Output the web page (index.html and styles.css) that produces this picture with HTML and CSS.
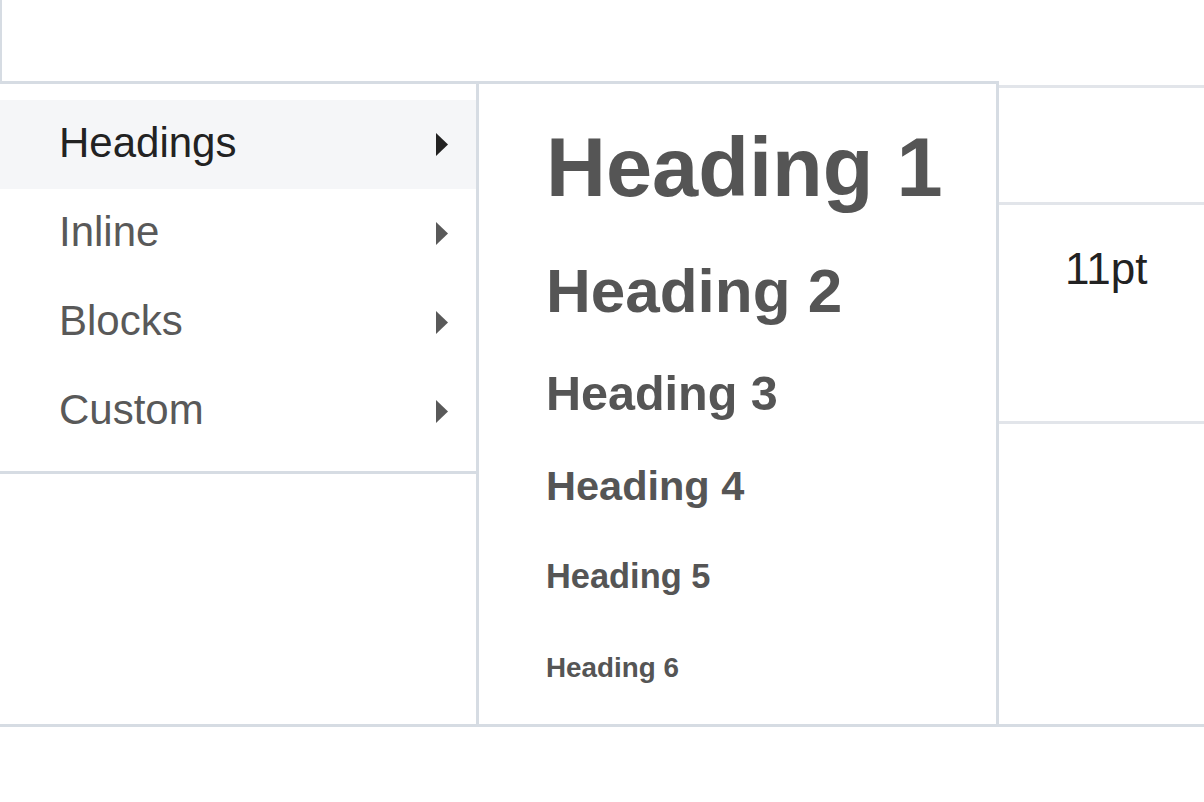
FILE: index.html
```html
<!DOCTYPE html>
<html lang="en">
<head>
    <meta charset="UTF-8">
    <meta name="viewport" content="width=device-width, initial-scale=1.0">
    <title>Formats menu</title>
    <link rel="stylesheet" href="styles.css">
</head>
<body>
    <div class="toolbar-box"></div>

    <div class="stage">
        <!-- Formats menu -->
        <div class="menu-col">
            <ul class="menu">
                <li class="menu-item active">
                    <span>Headings</span>
                    <svg class="caret" viewBox="0 0 12 23"><polygon points="0,0 12,11.5 0,23"/></svg>
                </li>
                <li class="menu-item">
                    <span>Inline</span>
                    <svg class="caret" viewBox="0 0 12 23"><polygon points="0,0 12,11.5 0,23"/></svg>
                </li>
                <li class="menu-item">
                    <span>Blocks</span>
                    <svg class="caret" viewBox="0 0 12 23"><polygon points="0,0 12,11.5 0,23"/></svg>
                </li>
                <li class="menu-item">
                    <span>Custom</span>
                    <svg class="caret" viewBox="0 0 12 23"><polygon points="0,0 12,11.5 0,23"/></svg>
                </li>
            </ul>
        </div>

        <!-- Headings submenu -->
        <ul class="submenu">
            <li class="submenu-item"><h1>Heading 1</h1></li>
            <li class="submenu-item"><h2>Heading 2</h2></li>
            <li class="submenu-item"><h3>Heading 3</h3></li>
            <li class="submenu-item"><h4>Heading 4</h4></li>
            <li class="submenu-item"><h5>Heading 5</h5></li>
            <li class="submenu-item"><h6>Heading 6</h6></li>
        </ul>

        <div class="side">
            <div class="side-row first"></div>
            <div class="side-row size">11pt</div>
            <div class="side-row last"></div>
        </div>
    </div>
</body>
</html>
```

FILE: styles.css
```css
/* Zoomed formats dropdown */
body {
    margin: 0;
    background-color: #fff;
    font-family: "Liberation Sans", Arial, sans-serif;
    color: #222;
}
.toolbar-box {
    width: 997px;
    height: 81px;
    border-left: 2px solid #d6dce3;
    border-bottom: 3px solid #d6dce3;
}
.stage {
    display: flex;
    height: 640px;
    border-bottom: 3px solid #d6dce3;
}
.menu-col {
    width: 476px;
    flex-shrink: 0;
}
.menu {
    list-style: none;
    margin: 0;
    padding: 16px 0 15px 0;
    border-bottom: 3px solid #d6dce3;
}
.menu-item {
    height: 89px;
    display: flex;
    align-items: center;
    justify-content: space-between;
    padding: 0 28px 0 59px;
    font-size: 42px;
    color: #595959;
}
.menu-item.active {
    background-color: #f5f6f8;
    color: #222;
}
.menu-item span {
    margin-top: -3px;
}
.caret {
    width: 12px;
    height: 23px;
    fill: currentColor;
}
.submenu {
    list-style: none;
    width: 517px;
    flex-shrink: 0;
    margin: 0;
    padding: 16px 0 8px 0;
    border-left: 3px solid #d6dce3;
    border-right: 3px solid #d6dce3;
}
.submenu-item {
    min-height: 91px;
    box-sizing: border-box;
    display: flex;
    align-items: center;
    padding: 18px 0 18px 67px;
}
.submenu-item h1,
.submenu-item h2,
.submenu-item h3,
.submenu-item h4,
.submenu-item h5,
.submenu-item h6 {
    margin: 0;
    line-height: 1.2;
    font-weight: bold;
    color: #555;
}
.submenu-item h1 { font-size: 83px; }
.submenu-item h2 { font-size: 62px; }
.submenu-item h3 { font-size: 48.5px; }
.submenu-item h4 { font-size: 41.5px; }
.submenu-item h5 { font-size: 34.4px; }
.submenu-item h6 { font-size: 27.8px; }
.side {
    flex: 1;
    margin-top: 1px;
    border-top: 3px solid #e2e5ea;
}
.side-row.first {
    height: 114px;
    border-bottom: 3px solid #e2e5ea;
}
.side-row.size {
    height: 177px;
    padding: 39px 0 0 66px;
    font-size: 44px;
    border-bottom: 3px solid #e2e5ea;
}
```
